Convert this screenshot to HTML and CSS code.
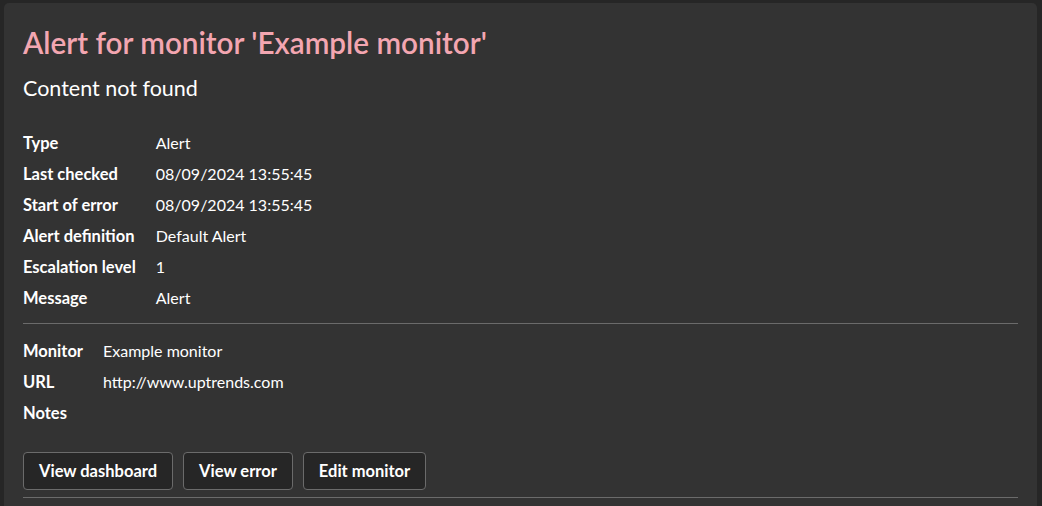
FILE: index.html
```html
<!DOCTYPE html>
<html lang="en">
<head>
    <meta charset="UTF-8">
    <title>Alert for monitor 'Example monitor'</title>
    <link rel="stylesheet" href="styles.css">
</head>
<body>
    <div class="alert-card">
        <h1 class="alert-title">Alert for monitor 'Example monitor'</h1>
        <h2 class="alert-subtitle">Content not found</h2>

        <table class="details">
            <tr><th>Type</th><td>Alert</td></tr>
            <tr><th>Last checked</th><td>08/09/2024 13:55:45</td></tr>
            <tr><th>Start of error</th><td>08/09/2024 13:55:45</td></tr>
            <tr><th>Alert definition</th><td>Default Alert</td></tr>
            <tr><th>Escalation level</th><td>1</td></tr>
            <tr><th>Message</th><td>Alert</td></tr>
        </table>

        <hr class="divider">

        <table class="details">
            <tr><th>Monitor</th><td>Example monitor</td></tr>
            <tr><th>URL</th><td>http://www.uptrends.com</td></tr>
            <tr><th>Notes</th><td></td></tr>
        </table>

        <div class="actions">
            <a class="btn" href="#">View dashboard</a>
            <a class="btn" href="#">View error</a>
            <a class="btn" href="#">Edit monitor</a>
        </div>

        <hr class="divider bottom">
    </div>
</body>
</html>
```

FILE: styles.css
```css
body {
    margin: 0;
    padding: 3px 5px 0 4px;
    background: #262626;
    font-family: Lato, "Open Sans", sans-serif;
    color: #ffffff;
}
.alert-card {
    background: #333333;
    border-radius: 5px 5px 0 0;
    padding: 22px 19px 8px 19px;
    min-height: 480px;
    box-sizing: border-box;
}
.alert-title {
    margin: 0;
    font-size: 29.7px;
    font-weight: 600;
    line-height: 36px;
    color: #f3a6b1;
}
.alert-subtitle {
    margin: 13px 0 25px 0;
    font-size: 21.5px;
    font-weight: 400;
    line-height: 28px;
}
.details {
    border-collapse: collapse;
    font-size: 16px;
}
.details th {
    text-align: left;
    font-size: 16.5px;
    font-weight: 700;
    padding: 0 20px 0 0;
    height: 31px;
}
.details td {
    padding: 0;
    height: 31px;
}
.divider {
    border: none;
    border-top: 1px solid #6b6b6b;
    margin: 10px 0 11px 0;
}
.actions {
    display: flex;
    gap: 10px;
    margin-top: 24px;
}
.btn {
    display: inline-block;
    padding: 8px 15px;
    border: 1px solid #6b6b6b;
    border-radius: 4px;
    background: #262626;
    color: #ffffff;
    font-size: 16.5px;
    font-weight: 700;
    line-height: 20px;
    text-decoration: none;
}
.divider.bottom {
    margin: 7px 0 0 0;
}
```
